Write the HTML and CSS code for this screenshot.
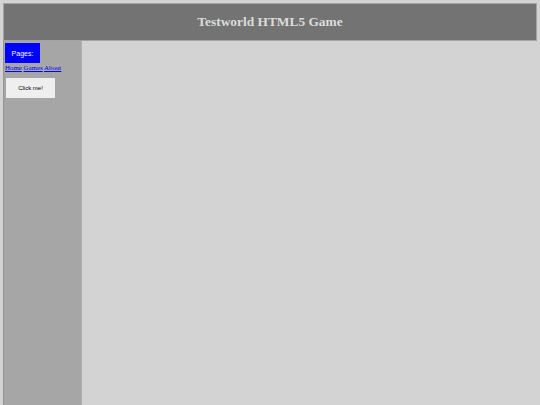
FILE: index.html
```html
<!DOCTYPE html>
<html>
<head>
<meta charset="utf-8">
<title>Testworld HTML5 Game</title>
<link rel="stylesheet" href="styles.css">
</head>
<body>
<div class="page">
  <header class="header">
    <h1 class="title">Testworld HTML5 Game</h1>
  </header>
  <div class="layout">
    <nav class="sidebar">
      <div class="pages-label">Pages:</div>
      <div class="links">
        <a href="#">Home</a> <a href="#">Games</a> <a href="#">About</a>
      </div>
      <button class="btn">Click me!</button>
    </nav>
    <main class="content"></main>
  </div>
</div>
</body>
</html>
```

FILE: styles.css
```css
html, body {
  margin: 0;
  padding: 0;
  height: 100%;
}
body {
  background: #d3d3d3;
  font-family: "Liberation Serif", serif;
}
.page {
  display: flex;
  flex-direction: column;
  height: 100%;
  padding: 3px 3px 0 3px;
  box-sizing: border-box;
}
.header {
  height: 38px;
  box-sizing: border-box;
  background: #737373;
  border: 1px solid #a3a3a3;
  display: flex;
  align-items: center;
  justify-content: center;
}
.title {
  margin: 0;
  font-family: "Liberation Serif", serif;
  font-weight: bold;
  font-size: 13.4px;
  color: #dcdcdc;
}
.layout {
  flex: 1;
  display: flex;
}
.sidebar {
  width: 79px;
  box-sizing: border-box;
  background: #a6a6a6;
  border-left: 1px solid #949494;
  border-right: 1px solid #b0b0b0;
  padding: 2px 1px;
  display: flex;
  flex-direction: column;
  align-items: flex-start;
}
.pages-label {
  width: 35px;
  height: 20px;
  background: #0000ff;
  color: #ffffff;
  font-family: "Liberation Sans", sans-serif;
  font-size: 7px;
  display: flex;
  align-items: center;
  justify-content: center;
}
.links {
  font-size: 6.9px;
  line-height: 9px;
  margin-top: 0;
  white-space: nowrap;
}
.links a {
  color: #0000ee;
}
.btn {
  margin: 6px 0 0 1px;
  width: 49px;
  height: 20px;
  padding: 0;
  background: #efefef;
  border: none;
  font-family: "Liberation Sans", sans-serif;
  font-size: 6px;
  color: #000;
}
.content {
  flex: 1;
}
```
